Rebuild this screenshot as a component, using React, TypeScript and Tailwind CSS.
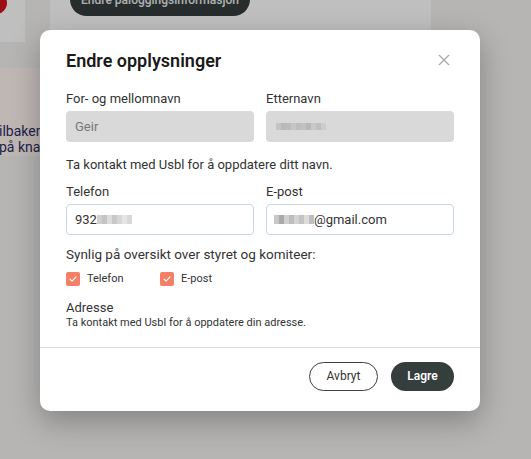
import React from "react";

const font = { fontFamily: "Roboto, 'Noto Sans', sans-serif" };

function Blur({ cells, h = 8 }: { cells: string[]; h?: number }) {
  return (
    <span className="inline-flex align-middle">
      {cells.map((c, i) => (
        <span key={i} className="inline-block w-[5px]" style={{ background: c, height: h }} />
      ))}
    </span>
  );
}

function Check() {
  return (
    <span className="flex h-[14px] w-[14px] items-center justify-center rounded-[2px] bg-[#f47f66]">
      <svg width="10" height="10" viewBox="0 0 10 10" fill="none">
        <path d="M2 5.2 L4.1 7.2 L8 2.8" stroke="white" strokeWidth="1.1" strokeLinecap="round" strokeLinejoin="round" />
      </svg>
    </span>
  );
}

export default function App() {
  return (
    <div className="relative h-[459px] w-[531px] overflow-hidden bg-[#f3f2f0]" style={font}>
      {/* page behind */}
      <div className="flex h-full">
        <div className="flex w-[50px] flex-col">
          <div className="relative h-[42px] w-[25px] overflow-hidden bg-white">
            <div className="absolute left-[-15px] top-[-8px] h-[22px] w-[22px] rounded-full bg-[#d0121b]" />
          </div>
          <div className="mt-[26px] h-[88px] w-full overflow-hidden whitespace-nowrap bg-[#fff4f1] pt-[55px] text-[14px] leading-[16px] text-[#2a2f5e]">
            <div className="ml-[-1px]">ilbakemelding</div>
            <div className="ml-[-1px]">på knappen</div>
          </div>
        </div>
        <div className="h-[300px] w-[381px] bg-white pl-[20px]">
          <div className="mt-[-17px] flex h-[33px] w-[180px] items-center justify-center whitespace-nowrap rounded-full bg-[#353d3d] text-[12px] font-medium text-[#e9eded]">
            Endre påloggingsinformasjon
          </div>
        </div>
      </div>

      {/* overlay */}
      <div className="absolute inset-0 bg-black/[0.25]" />

      {/* modal */}
      <div className="absolute left-[40px] top-[30px] w-[440px] rounded-[10px] bg-white shadow-[0_10px_30px_rgba(0,0,0,0.28)]">
        <div className="flex items-start justify-between px-[26px] pt-[19px]">
          <h2 className="text-[18px] font-semibold leading-[24px] text-[#1a1a1a]">Endre opplysninger</h2>
          <svg className="mr-[4px] mt-[5px]" width="12" height="12" viewBox="0 0 12 12">
            <path d="M1 1 L11 11 M11 1 L1 11" stroke="#a9a9a9" strokeWidth="1.3" />
          </svg>
        </div>

        <div className="px-[26px] pt-[18px]">
          <div className="grid grid-cols-2 gap-x-[12px]">
            <div>
              <div className="text-[13px] leading-[16px] text-[#333]">For- og mellomnavn</div>
              <div className="mt-[4px] flex h-[31px] items-center rounded-[4px] bg-[#d9d9d9] px-[9px] text-[13px] text-[#777]">Geir</div>
            </div>
            <div>
              <div className="text-[13px] leading-[16px] text-[#333]">Etternavn</div>
              <div className="mt-[4px] flex h-[31px] items-center rounded-[4px] bg-[#d9d9d9] px-[10px]">
                <Blur cells={["#c4c4c4", "#b9b9b9", "#bcbcbc", "#c6c6c6", "#bdbdbd", "#c2c2c2", "#b8b8b8", "#c8c8c8", "#bfbfbf", "#cccccc"]} h={7} />
              </div>
            </div>
          </div>

          <p className="mt-[15px] text-[13px] leading-[16px] text-[#333]">Ta kontakt med Usbl for å oppdatere ditt navn.</p>

          <div className="mt-[11px] grid grid-cols-2 gap-x-[12px]">
            <div>
              <div className="text-[13px] leading-[16px] text-[#333]">Telefon</div>
              <div className="mt-[4px] flex h-[31px] items-center rounded-[4px] border border-[#c9d6e8] bg-white px-[8px] text-[13px] text-[#333]">
                932
                <Blur cells={["#d0d0d0", "#c4c4c4", "#dcdcdc", "#c9c9c9", "#d6d6d6", "#e4e4e4", "#d8d8d8"]} h={9} />
              </div>
            </div>
            <div>
              <div className="text-[13px] leading-[16px] text-[#333]">E-post</div>
              <div className="mt-[4px] flex h-[31px] items-center rounded-[4px] border border-[#c9d6e8] bg-white px-[7px] text-[13px] text-[#333]">
                <Blur cells={["#c8c8c8", "#a9a9a9", "#cfcfcf", "#bdbdbd", "#d3d3d3", "#c4c4c4", "#dddddd", "#bfbfbf"]} h={9} />
                @gmail.com
              </div>
            </div>
          </div>

          <p className="mt-[10px] text-[13.5px] leading-[18px] text-[#333]">Synlig på oversikt over styret og komiteer:</p>
          <div className="mt-[8px] flex items-center">
            <div className="flex w-[94px] items-center gap-[7px]">
              <Check />
              <span className="text-[11px] text-[#333]">Telefon</span>
            </div>
            <div className="flex items-center gap-[7px]">
              <Check />
              <span className="text-[11px] text-[#333]">E-post</span>
            </div>
          </div>

          <div className="mt-[12px] text-[13px] leading-[16px] text-[#333]">Adresse</div>
          <div className="text-[11px] leading-[13px] text-[#333]">Ta kontakt med Usbl for å oppdatere din adresse.</div>
        </div>

        <div className="mt-[18px] border-t border-[#d9d9d9]" />

        <div className="flex justify-end gap-[13px] px-[26px] pb-[20px] pt-[14px]">
          <button className="h-[29px] w-[69px] rounded-full border border-[#3a3f3f] bg-white text-[12px] text-[#333]">Avbryt</button>
          <button className="h-[29px] w-[63px] rounded-full bg-[#353d3d] text-[12px] font-semibold text-white">Lagre</button>
        </div>
      </div>
    </div>
  );
}
